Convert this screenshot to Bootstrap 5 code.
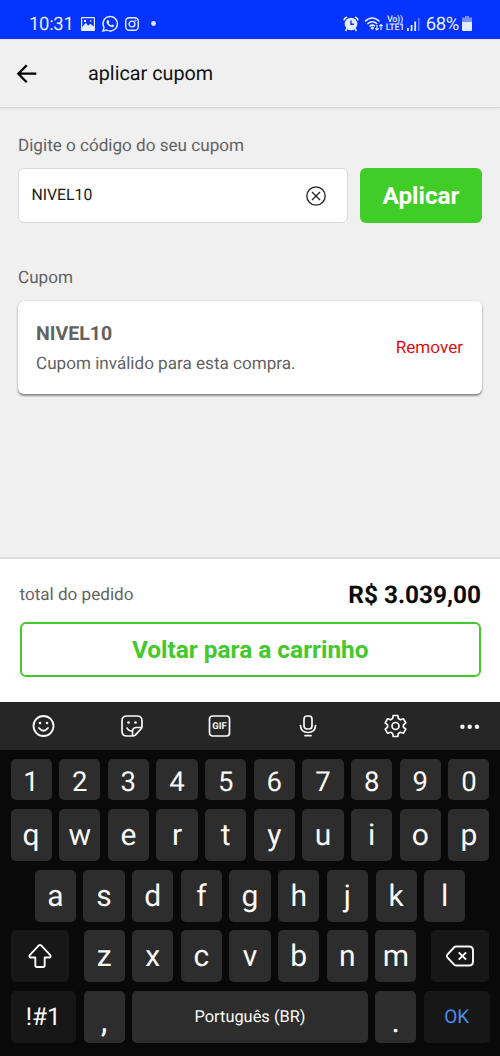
<!DOCTYPE html>
<html lang="pt-BR">
<head>
<meta charset="utf-8">
<meta name="viewport" content="width=device-width, initial-scale=1">
<title>Aplicar cupom</title>
<link href="https://cdn.jsdelivr.net/npm/bootstrap@5.3.0/dist/css/bootstrap.min.css" rel="stylesheet">
<style>
body{font-family:Roboto,sans-serif;width:500px;height:1056px;background:#f0f0f0;color:#626262;overflow:hidden;line-height:1.2;text-rendering:geometricPrecision}
svg{display:block;flex:none;overflow:visible}
.statusbar{height:40px;background:#0433fe;color:#e6ecff;padding:8px 28px 0 29px;border-bottom:1px solid #dfe4f8}
.clock{font-size:18.5px;line-height:32px;width:44px;letter-spacing:-.3px;padding-top:1px}
.battery-text{font-size:18.5px;line-height:32px;letter-spacing:-.4px;padding-top:1px}
.volte{font-size:9px;line-height:10px;font-weight:500;letter-spacing:-.3px;width:18px;white-space:nowrap}
.volte div:first-child{margin-bottom:-2px}
.topbar{height:68px;padding:0 16px 0 16px;border-bottom:1px solid #dadada;box-shadow:0 1px 2px #0001;color:#111}
.topbar h1{font-size:19.8px;font-weight:400;margin:0 0 0 50px}
.content{height:449px;padding:27px 18px 0}
.caption{font-size:17.1px;line-height:22px}
.code-box{width:330px;height:55px;border:1px solid #dadada;border-radius:6px;background:#fff;padding:1px 20px 0 12.5px;color:#1a1a1a;font-size:15.8px}
.btn-apply{width:122px;height:55px;background:#40cd28;color:#fff;border:0;border-radius:6px;font-size:24.3px;font-weight:700;padding:3px 0 0}
.coupon{height:93px;border:0;border-radius:6px;padding:2px 19px 0 18px;box-shadow:0 2px 2px #0006,0 0 2px #0002}
.coupon-code{font-size:19.5px;font-weight:700;line-height:24px}
.coupon-msg{font-size:17.1px;line-height:22px;margin-top:7px}
.remove{color:#dc1010;font-size:17.1px}
.summary{height:145px;background:#fff;border-top:2px solid #dcdcdc;padding:20px 19px 0 19.500px}
.total{font-size:24.4px;font-weight:700;color:#0a0a0a;line-height:32px}
.btn-back{height:55px;border:2.5px solid #43c92b;border-radius:6px;color:#43c92b;font-size:24.4px;font-weight:700;padding:2px 0 0;margin-top:10.500px}
.keyboard{height:354px;background:#090909;color:#fafafa}
.tools{height:48px;background:#262626;padding:0 20px 0 31px}
.keys{padding:9.4px 10.5px 0}
.krow{display:flex;gap:7.6px;height:52px;margin-bottom:8.6px}
.krow-num{height:41px;margin-bottom:8.600px}
.krow-mid{padding:0 24.3px}
.kkey{flex:1 1 0;min-width:0;display:flex;align-items:center;justify-content:center;background:#2d2d2d;border-radius:5px;font-size:30px;line-height:1;padding-top:2px}
.krow-num .kkey{font-size:27.5px;padding-top:3px}
.fn{background:#171717;padding-top:0}
.fixed-key{flex:0 0 41px}
.shift-key{flex:0 0 58.5px;margin-right:7px}
.del-key{flex:0 0 58.5px;margin-left:7px}
.side-key{flex:0 0 65.6px}
</style>
</head>
<body>
<div class="statusbar d-flex justify-content-between">
  <div class="d-flex align-items-center">
    <span class="clock">10:31</span>
    <svg class="ms-2" width="14" height="14" viewBox="0 0 14 14"><path fill="currentColor" fill-rule="evenodd" d="M1 0h12a1 1 0 0 1 1 1v12a1 1 0 0 1-1 1H1a1 1 0 0 1-1-1V1a1 1 0 0 1 1-1zm.2 1.2v9l3.500-4.500 2.500 3 2-2 3.600 2.800V1.200zM4 2.700a1.200 1.200 0 1 1 0 2.400 1.200 1.200 0 0 1 0-2.400zM9.800 3l1 1-1 1-1-1z"/></svg>
    <svg style="margin-left:7px" width="16" height="16" viewBox="0 0 16 16"><path fill="none" stroke="currentColor" stroke-width="1.400" d="M1 15l1-3.600A7.200 7.200 0 1 1 4.700 14z"/><path fill="currentColor" d="M5.600 4.100c.5-.4.900-.2 1.100.2l.6 1.400c.1.400-.5.900-.6 1.200.6 1.200 1.500 1.900 2.600 2.400.4-.2.800-1 1.100-.9l1.500.8c.4.200.1 1-.2 1.400-.8.900-2 .8-3.300.2C6.600 10 5.100 8.400 4.600 6.800c-.2-1 .2-2 1-2.700z"/></svg>
    <svg style="margin-left:7px" width="14" height="14" viewBox="0 0 14 14" fill="none" stroke="currentColor" stroke-width="1.400"><rect x=".7" y=".7" width="12.600" height="12.600" rx="3.500"/><circle cx="7" cy="7" r="2.900"/><circle cx="10.500" cy="3.500" r=".3"/></svg>
    <svg style="margin-left:12px" width="5" height="5"><circle cx="2.500" cy="2.500" r="2.400" fill="currentColor"/></svg>
  </div>
  <div class="d-flex align-items-center">
    <svg width="16" height="16" viewBox="0 0 16 16"><circle cx="8" cy="8" r="6.300" fill="currentColor"/><path d="M8 4.500V8.300H11" fill="none" stroke="#0433fe" stroke-width="1.400"/><path d="M.8 4.400Q1.300 2 4 1M15.200 4.400Q14.700 2 12 1M4 12.500L2.500 15M12 12.500L13.500 15" fill="none" stroke="currentColor" stroke-width="1.500"/></svg>
    <svg style="margin-left:5px" width="20" height="16" viewBox="0 0 20 16" fill="none" stroke="currentColor" stroke-width="1.500"><path d="M1 5.500Q8-1.500 15.500 5.500M3.300 8Q8.300 3.500 13.200 8M5.500 10.300Q8.300 8 11 10.300"/><circle cx="8.300" cy="12" r=".8" fill="currentColor"/><path stroke-width="1.200" d="M13 9v5M11.300 12.300l1.700 1.700 1.700-1.700M17 14V8.500M15.300 10.200L17 8.500l1.700 1.700"/></svg>
    <div class="volte text-center" style="margin-left:2px"><div>Vo))</div><div>LTE1</div></div>
    <svg style="margin-left:3px" width="14" height="14" viewBox="0 0 14 14" fill="currentColor"><path d="M0 11h1.800v3H0zM3.700 8h1.800v6H3.700zM7.300 4.500h1.800V14H7.300z"/><path opacity=".4" d="M11 1h1.600v13H11z"/></svg>
    <span class="battery-text" style="margin-left:5px">68%</span>
    <svg style="margin-left:3px" width="10" height="15" viewBox="0 0 10 15" fill="currentColor"><path opacity=".5" d="M3 0h4v1.500h3V6H0V1.500h3z"/><path d="M0 6h10v8a1 1 0 0 1-1 1H1a1 1 0 0 1-1-1z"/></svg>
  </div>
</div>
<header class="topbar d-flex align-items-center">
  <svg width="22" height="20" viewBox="0 0 22 20" fill="none" stroke="#000" stroke-width="2.300"><path d="M20.300 9.700H3M10.700 1.200L2.300 9.700l8.400 8.500"/></svg>
  <h1>aplicar cupom</h1>
</header>
<main class="content">
  <div class="caption">Digite o código do seu cupom</div>
  <div class="d-flex justify-content-between" style="margin-top:10.500px">
    <div class="code-box d-flex align-items-center justify-content-between"><span>NIVEL10</span>
      <svg width="22" height="22" viewBox="0 0 22 22" fill="none" stroke="#222" stroke-width="1.300"><circle cx="11" cy="11" r="9.200"/><path d="M7 7l8 8M15 7l-8 8"/></svg></div>
    <button class="btn btn-apply">Aplicar</button>
  </div>
  <div class="caption" style="margin-top:44.500px">Cupom</div>
  <div class="card coupon flex-row align-items-center justify-content-between" style="margin-top:11.500px">
    <div><div class="coupon-code">NIVEL10</div><div class="coupon-msg">Cupom inválido para esta compra.</div></div>
    <div class="remove">Remover</div>
  </div>
</main>
<section class="summary">
  <div class="d-flex justify-content-between align-items-center"><span class="caption">total do pedido</span><span class="total">R$ 3.039,00</span></div>
  <button class="btn btn-back w-100">Voltar para a carrinho</button>
</section>
<section class="keyboard">
  <div class="tools d-flex align-items-center">
    <svg width="25" height="24" viewBox="0 0 24 24" fill="none" stroke="currentColor" stroke-width="1.800"><circle cx="12" cy="12" r="10"/><path stroke-linecap="round" d="M7.500 14q4.500 5.500 9 0"/><g fill="currentColor" stroke="none"><circle cx="8.500" cy="9" r="1.300"/><circle cx="15.500" cy="9" r="1.300"/></g></svg>
    <svg style="margin-left:64px" width="24" height="24" viewBox="0 0 24 24" fill="none" stroke="currentColor" stroke-width="1.700"><path stroke-linejoin="round" d="M12.500 22H7q-5 0-5-5V7q0-5 5-5h10q5 0 5 5v5.500q0 1.500-1 2.500l-5.500 5.800q-1.200 1.200-3 1.200v-4.500q0-4 4-4H22M6.800 13.500q1.500 3.500 5 3.500"/><g fill="currentColor" stroke="none"><circle cx="8.500" cy="8.500" r="1.300"/><circle cx="15.500" cy="8.500" r="1.300"/></g></svg>
    <svg style="margin-left:63px" width="25" height="24" viewBox="0 0 25 24"><rect x="2.500" y="2" width="20" height="20" rx="3" fill="none" stroke="currentColor" stroke-width="1.700"/><text x="12.500" y="15.300" text-anchor="middle" font-size="9.500" font-weight="700" fill="currentColor">GIF</text></svg>
    <svg style="margin-left:63.500px" width="24" height="24" viewBox="0 0 24 24" fill="none" stroke="currentColor" stroke-width="1.700"><rect x="8" y="2" width="8" height="13" rx="3"/><path stroke-linecap="round" d="M4.500 11.500q.3 7 7.500 7t7.500-7M9 21.700h6"/></svg>
    <svg style="margin-left:63px" width="25" height="24" viewBox="0 0 24 24" fill="none" stroke="currentColor" stroke-width="1.700" stroke-linejoin="round"><path d="M9.700 1.500h4.600l.6 3.100 2 1.200 3.100-1 2.300 4-2.400 2.100v2.200l2.400 2.100-2.300 4-3.100-1-2 1.200-.6 3.100H9.700l-.6-3.100-2-1.200-3.100 1-2.300-4 2.400-2.100v-2.200L1.700 8.800l2.300-4 3.100 1 2-1.200z"/><circle cx="12" cy="12" r="3.500"/></svg>
    <svg class="ms-auto" width="22" height="24" fill="currentColor"><circle cx="4.400" cy="12.700" r="2.200"/><circle cx="11.700" cy="12.700" r="2.200"/><circle cx="19" cy="12.700" r="2.200"/></svg>
  </div>
  <div class="keys">
    <div class="krow krow-num"><div class="kkey">1</div><div class="kkey">2</div><div class="kkey">3</div><div class="kkey">4</div><div class="kkey">5</div><div class="kkey">6</div><div class="kkey">7</div><div class="kkey">8</div><div class="kkey">9</div><div class="kkey">0</div></div>
    <div class="krow"><div class="kkey">q</div><div class="kkey">w</div><div class="kkey">e</div><div class="kkey">r</div><div class="kkey">t</div><div class="kkey">y</div><div class="kkey">u</div><div class="kkey">i</div><div class="kkey">o</div><div class="kkey">p</div></div>
    <div class="krow krow-mid"><div class="kkey">a</div><div class="kkey">s</div><div class="kkey">d</div><div class="kkey">f</div><div class="kkey">g</div><div class="kkey">h</div><div class="kkey">j</div><div class="kkey">k</div><div class="kkey">l</div></div>
    <div class="krow">
      <div class="kkey fn shift-key"><svg width="24" height="24" viewBox="0 0 24 24" fill="none" stroke="currentColor" stroke-width="1.900" stroke-linejoin="round"><path d="M13.200 1.400l9 9.800q1.300 2-.8 2.300H16.700v7.500q0 2-1.500 2H8.800q-1.500 0-1.500-2v-7.500H2.600q-2.100-.3-.8-2.300l9-9.800q1.200-1 2.400 0z"/></svg></div>
      <div class="kkey">z</div><div class="kkey">x</div><div class="kkey">c</div><div class="kkey">v</div><div class="kkey">b</div><div class="kkey">n</div><div class="kkey">m</div>
      <div class="kkey fn del-key"><svg width="28" height="22" viewBox="0 0 28 22" fill="none" stroke="currentColor" stroke-width="1.900" stroke-linejoin="round"><path d="M10 1.500h13q4 0 4 4v11q0 4-4 4H10q-1.300 0-2-1L1.300 12.300q-.8-1.300 0-2.600L8 2.500q.7-1 2-1z"/><path d="M12.700 7.300l7.400 7.400M20.100 7.300l-7.400 7.400"/></svg></div>
    </div>
    <div class="krow">
      <div class="kkey fn side-key" style="font-size:24.500px">!#1</div><div class="kkey fixed-key" style="padding-top:8px;font-size:34px">,</div>
      <div class="kkey" style="font-size:16.400px">Português (BR)</div>
      <div class="kkey fixed-key" style="padding-top:8px;font-size:32px">.</div><div class="kkey fn side-key" style="font-size:19px;color:#4a8de8">OK</div>
    </div>
  </div>
</section>
<script src="https://cdn.jsdelivr.net/npm/bootstrap@5.3.0/dist/js/bootstrap.bundle.min.js"></script>
</body>
</html>
